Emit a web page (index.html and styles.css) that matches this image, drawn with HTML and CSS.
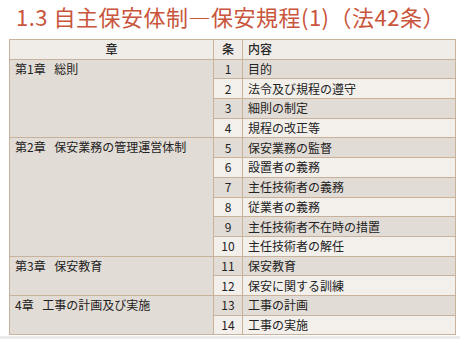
FILE: index.html
```html
<!DOCTYPE html>
<html lang="ja">
<head>
<meta charset="utf-8">
<link rel="stylesheet" href="styles.css">
</head>
<body>
<div class="page">
  <h1 class="title">1.3 自主保安体制―保安規程(1)（法42条）</h1>
  <table class="rules">
    <colgroup>
      <col class="c-chap"><col class="c-num"><col class="c-text">
    </colgroup>
    <thead>
      <tr><th class="h-chap">章</th><th class="h-num">条</th><th class="h-text">内容</th></tr>
    </thead>
    <tbody>
      <tr class="dark"><td class="chap" rowspan="4">第1章 総則</td><td class="num">1</td><td class="text">目的</td></tr>
      <tr class="light"><td class="num">2</td><td class="text">法令及び規程の遵守</td></tr>
      <tr class="dark"><td class="num">3</td><td class="text">細則の制定</td></tr>
      <tr class="light"><td class="num">4</td><td class="text">規程の改正等</td></tr>
      <tr class="dark"><td class="chap" rowspan="6">第2章 保安業務の管理運営体制</td><td class="num">5</td><td class="text">保安業務の監督</td></tr>
      <tr class="light"><td class="num">6</td><td class="text">設置者の義務</td></tr>
      <tr class="dark"><td class="num">7</td><td class="text">主任技術者の義務</td></tr>
      <tr class="light"><td class="num">8</td><td class="text">従業者の義務</td></tr>
      <tr class="dark"><td class="num">9</td><td class="text">主任技術者不在時の措置</td></tr>
      <tr class="light"><td class="num">10</td><td class="text">主任技術者の解任</td></tr>
      <tr class="dark"><td class="chap" rowspan="2">第3章 保安教育</td><td class="num">11</td><td class="text">保安教育</td></tr>
      <tr class="light"><td class="num">12</td><td class="text">保安に関する訓練</td></tr>
      <tr class="dark"><td class="chap" rowspan="2">4章 工事の計画及び実施</td><td class="num">13</td><td class="text">工事の計画</td></tr>
      <tr class="light"><td class="num">14</td><td class="text">工事の実施</td></tr>
    </tbody>
  </table>
</div>
<div class="footer-strip"></div>
</body>
</html>
```
FILE: styles.css
```css
html, body {
  margin: 0;
  padding: 0;
  background: #ffffff;
}
body {
  width: 460px;
  height: 339px;
  overflow: hidden;
  font-family: "Noto Sans CJK JP", "Liberation Sans", sans-serif;
  color: #222222;
}
.page {
  padding: 0 0 0 9px;
  height: 336px;
}
.title {
  margin: 0 0 0 7px;
  padding-top: 1px;
  height: 38px;
  font-size: 22px;
  font-weight: 400;
  line-height: 30px;
  color: #c9553c;
  letter-spacing: 0.5px;
  white-space: nowrap;
}
.rules {
  border-collapse: collapse;
  table-layout: fixed;
  width: 446px;
  font-size: 12px;
  line-height: 14px;
}
.c-chap { width: 204px; }
.c-num { width: 29px; }
.c-text { width: 213px; }
.rules th, .rules td {
  border: 1px solid #c8b29b;
  padding: 0 5px;
  height: 18.7px;
  white-space: nowrap;
  overflow: hidden;
}
.rules th {
  background: #f0ece8;
  font-weight: 500;
  color: #2a2a2a;
}
.h-chap, .h-num { text-align: center; }
.h-text { text-align: left; }
.rules .chap {
  background: #e2dcd6;
  vertical-align: top;
  padding-top: 2px;
  text-align: left;
  word-spacing: 6px;
}
.rules .num {
  text-align: center;
  padding: 0;
}
.dark .num, .dark .text { background: #e2dcd6; }
.light .num, .light .text { background: #f3f0ec; }
.footer-strip {
  height: 3px;
  background: #ebebeb;
}
```
